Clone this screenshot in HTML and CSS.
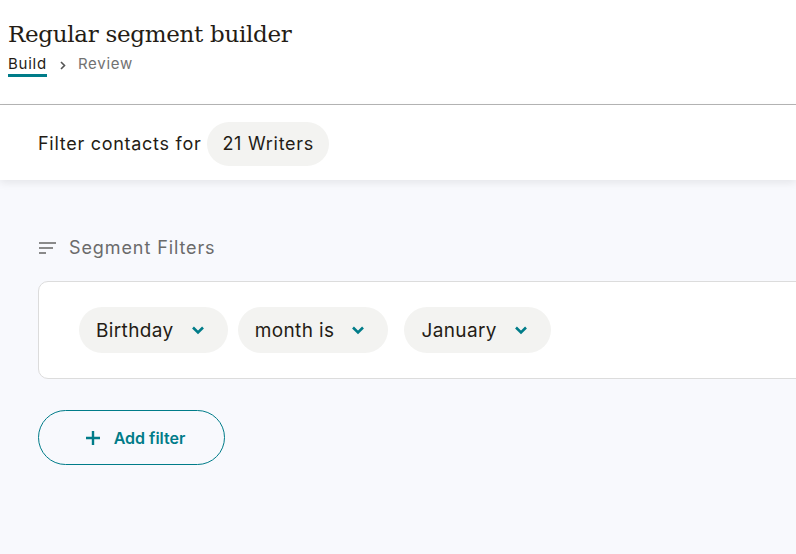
FILE: index.html
```html
<!DOCTYPE html>
<html lang="en">
<head>
    <meta charset="UTF-8">
    <meta name="viewport" content="width=device-width, initial-scale=1.0">
    <title>Regular segment builder</title>
    <link rel="stylesheet" href="styles.css">
</head>
<body>
    <header class="topo">
        <h1 class="titulo">Regular segment builder</h1>
        <nav class="trilha">
            <span class="passo ativo">Build</span>
            <svg class="seta" width="10" height="12" viewBox="0 0 10 12"><path d="M3 3 L6.5 6.5 L3 10" fill="none" stroke="#555555" stroke-width="1.6"/></svg>
            <span class="passo">Review</span>
        </nav>
    </header>

    <section class="barra">
        <span>Filter contacts for</span>
        <span class="pilula">21 Writers</span>
    </section>

    <main class="conteudo">
        <div class="rotulo">
            <svg width="17" height="12" viewBox="0 0 17 12"><path d="M0 1h17M0 6h14M0 11h7" stroke="#8a8a8a" stroke-width="2"/></svg>
            <span>Segment Filters</span>
        </div>

        <div class="cartao">
            <button class="escolha">Birthday <svg width="14" height="10" viewBox="0 0 14 10"><path d="M2 2.5 L7 7.5 L12 2.5" fill="none" stroke="#007c89" stroke-width="2.6"/></svg></button>
            <button class="escolha">month is <svg width="14" height="10" viewBox="0 0 14 10"><path d="M2 2.5 L7 7.5 L12 2.5" fill="none" stroke="#007c89" stroke-width="2.6"/></svg></button>
            <button class="escolha larga">January <svg width="14" height="10" viewBox="0 0 14 10"><path d="M2 2.5 L7 7.5 L12 2.5" fill="none" stroke="#007c89" stroke-width="2.6"/></svg></button>
        </div>

        <button class="adicionar">
            <svg width="14" height="14" viewBox="0 0 14 14"><path d="M7 0v14M0 7h14" stroke="#007c89" stroke-width="2.4"/></svg>
            Add filter
        </button>
    </main>
</body>
</html>
```

FILE: styles.css
```css
body {
    margin: 0;
    background-color: #f8f9fd;
    font-family: Inter, "Liberation Sans", sans-serif;
    color: #241c15;
    overflow: hidden;
    height: 554px;
}

.topo {
    background-color: #ffffff;
    padding: 18px 8px 0;
    height: 86px;
    border-bottom: 1px solid #b5b5b5;
}

.titulo {
    margin: 0;
    font-family: "DejaVu Serif", Georgia, serif;
    font-weight: normal;
    font-size: 23px;
    line-height: 32px;
    letter-spacing: -0.3px;
    color: #241c15;
}

.trilha {
    display: flex;
    align-items: center;
    gap: 9px;
    margin-top: 2px;
    font-size: 15px;
    letter-spacing: 0.05em;
}

.passo {
    color: #727272;
    padding: 2px 0 1px;
    border-bottom: 3px solid transparent;
}

.passo.ativo {
    color: #241c15;
    border-bottom-color: #007c89;
}

.seta {
    margin: 0 1px 0 2px;
}

.barra {
    background-color: #ffffff;
    height: 75px;
    display: flex;
    align-items: center;
    gap: 6px;
    padding-left: 38px;
    padding-top: 2px;
    box-sizing: border-box;
    font-size: 18px;
    letter-spacing: 0.04em;
    box-shadow: 0 3px 8px rgba(0, 0, 0, 0.08);
    position: relative;
}

.pilula {
    background-color: #f3f3f1;
    border-radius: 22px;
    padding: 0 15px;
    height: 44px;
    display: flex;
    align-items: center;
}

.conteudo {
    padding: 57px 0 0 38px;
}

.rotulo {
    display: flex;
    align-items: center;
    gap: 13px;
    padding-left: 1px;
    font-size: 18px;
    letter-spacing: 0.05em;
    color: #6b6b6b;
}

.cartao {
    margin-top: 23px;
    margin-right: -20px;
    background-color: #ffffff;
    border: 1px solid #dcdcdc;
    border-radius: 10px;
    height: 96px;
    display: flex;
    align-items: center;
    gap: 10px;
    padding-left: 40px;
}

.escolha {
    border: none;
    background-color: #f3f3f1;
    border-radius: 23px;
    height: 46px;
    padding: 0 23px 0 17px;
    display: flex;
    align-items: center;
    gap: 17px;
    font-family: inherit;
    font-size: 19px;
    letter-spacing: 0.02em;
    color: #241c15;
}

.larga {
    margin-left: 6px;
}

.adicionar {
    margin-top: 31px;
    width: 187px;
    height: 55px;
    border: 1px solid #007c89;
    border-radius: 28px;
    background: transparent;
    display: flex;
    align-items: center;
    justify-content: center;
    gap: 14px;
    padding-left: 14px;
    font-family: inherit;
    font-size: 16px;
    font-weight: 600;
    color: #007c89;
}
```
